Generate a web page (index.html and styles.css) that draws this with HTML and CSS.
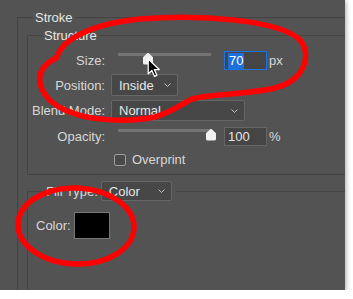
FILE: index.html
```html
<!DOCTYPE html>
<html lang="en">
<head>
    <meta charset="UTF-8">
    <title>Layer Style - Stroke</title>
    <link rel="stylesheet" href="styles.css">
</head>
<body>
    <div class="panel">
        <fieldset class="group group-stroke">
            <legend class="title">Stroke</legend>

            <fieldset class="group group-structure">
                <legend class="subtitle">Structure</legend>

                <div class="row row-size">
                    <span class="lbl">Size:</span>
                    <div class="slider">
                        <div class="track"></div>
                        <div class="thumb" style="left: 25px"></div>
                    </div>
                    <div class="num num-active"><span class="sel">70</span></div>
                    <span class="unit">px</span>
                </div>

                <div class="row row-position">
                    <span class="lbl">Position:</span>
                    <div class="select select-position">
                        <span>Inside</span>
                        <svg class="chev" width="7" height="4" viewBox="0 0 7 4"><polyline points="0.5,0.5 3.5,3.5 6.5,0.5"/></svg>
                    </div>
                </div>

                <div class="row row-blend">
                    <span class="lbl">Blend Mode:</span>
                    <div class="select select-blend">
                        <span>Normal</span>
                        <svg class="chev" width="7" height="4" viewBox="0 0 7 4"><polyline points="0.5,0.5 3.5,3.5 6.5,0.5"/></svg>
                    </div>
                </div>

                <div class="row row-opacity">
                    <span class="lbl">Opacity:</span>
                    <div class="slider">
                        <div class="track"></div>
                        <div class="thumb" style="left: 88px"></div>
                    </div>
                    <div class="num">100</div>
                    <span class="unit">%</span>
                </div>

                <div class="row row-check">
                    <span class="lbl"></span>
                    <span class="check"></span>
                    <span class="check-label">Overprint</span>
                </div>
            </fieldset>

            <fieldset class="group group-fill">
                <legend class="fill-legend">
                    <span class="fill-label">Fill Type:</span>
                    <span class="select select-fill">
                        <span>Color</span>
                        <svg class="chev" width="7" height="4" viewBox="0 0 7 4"><polyline points="0.5,0.5 3.5,3.5 6.5,0.5"/></svg>
                    </span>
                </legend>
                <div class="row row-color">
                    <span class="color-label">Color:</span>
                    <span class="swatch"></span>
                </div>
            </fieldset>
        </fieldset>

        <!-- hand drawn marks over the dialog -->
        <svg class="marks" width="345" height="290" viewBox="0 0 345 290">
            <path d="M57,57 C62,40 90,24 140,19 C200,14 280,20 300,40 C312,55 305,80 275,88 C245,95 205,94 192,99 C180,105 172,112 155,117 C130,122 90,122 65,110 C42,100 34,80 44,67 C48,62 53,60 57,57 Z"/>
            <ellipse cx="76" cy="226" rx="58" ry="38" transform="rotate(2 76 226)"/>
        </svg>

        <svg class="cursor" width="14" height="20" viewBox="0 0 13 19">
            <path d="M1,1 L1,15 L4.5,11.8 L7,17.5 L9.2,16.5 L6.8,11 L11.5,11 Z"/>
        </svg>
    </div>
</body>
</html>
```

FILE: styles.css
```css
body {
    margin: 0;
    background-color: #fff;
    font-family: "Liberation Sans", Arial, sans-serif;
    font-size: 13px;
    color: #d8d8d8;
}
.panel {
    position: relative;
    width: 345px;
    height: 290px;
    box-sizing: border-box;
    padding: 10px 0 0 17px;
    background-color: #535353;
    overflow: hidden;
    box-shadow: 1px 1px 5px rgba(0,0,0,0.35);
}
.group {
    margin: 0;
    min-width: 0;
    border: none;
    border-top: 1px solid #444;
    border-left: 1px solid #444;
}
.group-stroke {
    padding: 3px 0 0 9px;
    height: 400px;
}
.title {
    margin-left: 6px;
    padding: 0 2px;
    line-height: 15px;
    color: #e6e6e6;
}
.group-structure {
    padding: 8px 0 5px 0;
    border-bottom: 1px solid #444;
}
.subtitle {
    margin-left: 14px;
    padding: 0 2px;
    line-height: 15px;
    color: #e6e6e6;
}
.row {
    display: flex;
    align-items: center;
}
.row + .row {
    margin-top: 4px;
}
.row-size {
    height: 19px;
}
.row-position {
    height: 22px;
}
.row-blend {
    height: 21px;
}
.row-opacity {
    height: 19px;
    margin-top: 6px !important;
}
.row-check {
    height: 19px;
}
.lbl {
    width: 77px;
    margin-right: 6px;
    text-align: right;
    flex-shrink: 0;
}
.slider {
    position: relative;
    width: 93px;
    height: 14px;
    margin-left: 7px;
    margin-top: -2px;
}
.track {
    height: 3px;
    background-color: #747474;
}
.thumb {
    position: absolute;
    top: 0;
    width: 10px;
    height: 12px;
    background-color: #f2f2f2;
    clip-path: polygon(50% 0, 100% 40%, 100% 100%, 0 100%, 0 40%);
    border-radius: 0 0 2px 2px;
}
.num {
    box-sizing: border-box;
    width: 43px;
    height: 19px;
    margin-left: 13px;
    padding: 1px 0 0 3px;
    background-color: #454545;
    border: 1px solid #666;
    line-height: 16px;
    color: #e4e4e4;
}
.num-active {
    border-color: #1a73e8;
}
.sel {
    display: inline-block;
    padding: 0 1px;
    background-color: #1e6fd9;
    color: #fff;
}
.unit {
    margin-left: 2px;
}
.select {
    display: flex;
    align-items: center;
    justify-content: space-between;
    box-sizing: border-box;
    height: 100%;
    padding: 0 6px 0 7px;
    background-color: #474747;
    border: 1px solid #666;
    border-radius: 2px;
    color: #e6e6e6;
}
.select-position {
    width: 67px;
}
.select-blend {
    width: 134px;
}
.chev {
    fill: none;
    stroke: #c0c0c0;
    stroke-width: 1;
}
.check {
    box-sizing: border-box;
    width: 12px;
    height: 12px;
    margin-left: 3px;
    border: 1px solid #a0a0a0;
    border-radius: 2px;
    background-color: #4a4a4a;
}
.check-label {
    margin-left: 6px;
}
.group-fill {
    margin-top: 6px;
    padding: 0 0 0 8px;
    height: 200px;
}
.fill-legend {
    display: flex;
    align-items: center;
    margin-left: 8px;
    padding: 0 4px 0 2px;
}
.fill-label {
    margin-right: 3px;
}
.select-fill {
    width: 71px;
    height: 20px;
}
.row-color {
    margin-top: 11px;
}
.color-label {
    margin-right: 3px;
}
.swatch {
    width: 36px;
    height: 27px;
    box-sizing: border-box;
    background-color: #000;
    border: 1px solid #777;
}
.marks {
    position: absolute;
    left: 0;
    top: 0;
    fill: none;
    stroke: #ff0000;
    stroke-width: 5.5;
}
.cursor {
    position: absolute;
    left: 147px;
    top: 58px;
}
.cursor path {
    fill: #000;
    stroke: #fff;
    stroke-width: 1.2;
    stroke-linejoin: round;
}
```
